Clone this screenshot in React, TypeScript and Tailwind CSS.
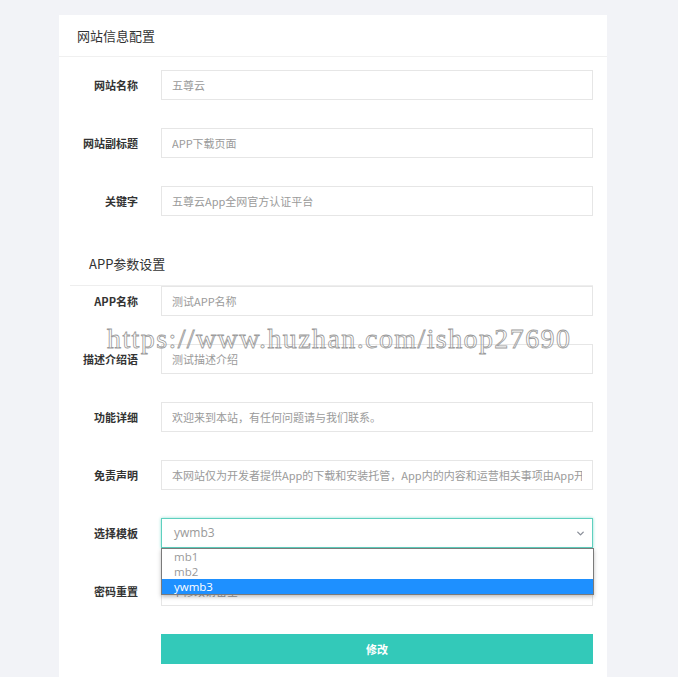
import { ChevronDown } from "lucide-react";

const cjk = "font-['Microsoft_YaHei','Noto_Sans_CJK_SC',sans-serif]";

interface RowProps {
  label: string;
  placeholder: string;
  first?: boolean;
}

const Row = ({ label, placeholder, first }: RowProps) => (
  <div className={`flex items-center h-[30px] ${first ? "" : "mt-[28px]"}`}>
    <label className="w-[79px] shrink-0 text-right text-[11px] font-bold text-[#333]">
      {label}
    </label>
    <input
      readOnly
      placeholder={placeholder}
      className="ml-[23px] h-[30px] flex-1 min-w-0 border border-[#e6e6e6] bg-white px-[10px] text-[11px] text-[#666] outline-none placeholder:text-[#9a9a9a]"
    />
  </div>
);

const siteRows = [
  { label: "网站名称", placeholder: "五尊云" },
  { label: "网站副标题", placeholder: "APP下载页面" },
  { label: "关键字", placeholder: "五尊云App全网官方认证平台" },
];

const appRows = [
  { label: "APP名称", placeholder: "测试APP名称" },
  { label: "描述介绍语", placeholder: "测试描述介绍" },
  { label: "功能详细", placeholder: "欢迎来到本站，有任何问题请与我们联系。" },
  {
    label: "免责声明",
    placeholder:
      "本网站仅为开发者提供App的下载和安装托管，App内的内容和运营相关事项由App开发者负责",
  },
];

const options = ["mb1", "mb2", "ywmb3"];

export default function App() {
  return (
    <div className={`relative min-h-[677px] bg-[#f2f3f7] pl-[59px] pt-[15px] ${cjk}`}>
      <div className="w-[548px] bg-white pb-[40px]">
        <div className="flex h-[42px] items-center border-b border-[#f0f0f0] px-[18px] text-[13px] text-[#333]">
          网站信息配置
        </div>

        <div className="pt-[13px] pr-[14px]">
          {siteRows.map((r, i) => (
            <Row key={r.label} label={r.label} placeholder={r.placeholder} first={i === 0} />
          ))}
        </div>

        <div className="ml-[11px] mr-[14px] mt-[37px] border-b border-[#eeeeee] pb-[10px] pl-[19px] text-[13px] leading-[22px] text-[#333]">
          APP参数设置
        </div>

        <div className="pr-[14px]">
          {appRows.map((r, i) => (
            <Row key={r.label} label={r.label} placeholder={r.placeholder} first={i === 0} />
          ))}

          <div className="mt-[28px] flex h-[30px] items-center">
            <label className="w-[79px] shrink-0 text-right text-[11px] font-bold text-[#333]">
              选择模板
            </label>
            <div className="relative ml-[23px] flex-1">
              <div className="flex h-[30px] items-center justify-between border border-[#5fd0bf] bg-white pl-[12px] pr-[6px] text-[12px] text-[#999] shadow-[0_0_3px_#8fe0d3] font-['Open_Sans','Noto_Sans',sans-serif]">
                <span>ywmb3</span>
                <ChevronDown size={11} strokeWidth={3} className="text-[#8a8f99]" />
              </div>
              <div className="absolute left-0 right-[-1px] top-full z-10 border border-[#7a7a7a] bg-white shadow-[0_2px_4px_rgba(0,0,0,0.25)] font-['Open_Sans','Noto_Sans',sans-serif]">
                {options.map((o) => (
                  <div
                    key={o}
                    className={`h-[15px] overflow-hidden pl-[12px] text-[11.5px] leading-[15px] ${
                      o === "ywmb3" ? "bg-[#1e90ff] text-white" : "text-[#999]"
                    }`}
                  >
                    {o}
                  </div>
                ))}
              </div>
            </div>
          </div>

          <Row label="密码重置" placeholder="不修改请留空" />

          <div className="mt-[28px] flex">
            <div className="w-[79px] shrink-0" />
            <button className="ml-[23px] h-[30px] flex-1 bg-[#33c9b9] text-[11px] font-bold text-white">
              修改
            </button>
          </div>
        </div>
      </div>

      <div className="pointer-events-none absolute left-[107px] top-[325px] whitespace-nowrap font-['Liberation_Serif',serif] text-[28px] leading-[28px] tracking-[1.4px] text-transparent [-webkit-text-stroke:0.8px_#9a9a9a]">
        https://www.huzhan.com/ishop27690
      </div>
    </div>
  );
}
